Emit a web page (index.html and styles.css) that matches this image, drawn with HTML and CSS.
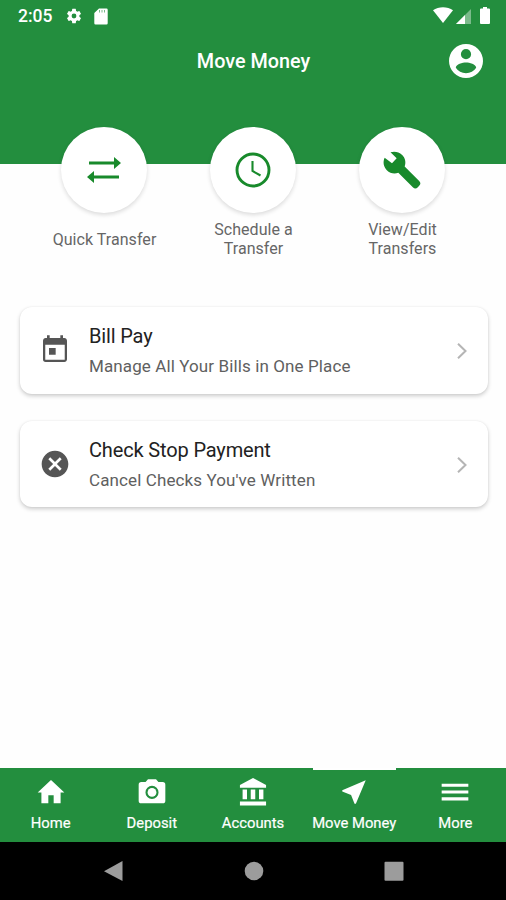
FILE: index.html
```html
<!DOCTYPE html>
<html lang="en">
<head>
<meta charset="utf-8">
<title>Move Money</title>
<link rel="stylesheet" href="styles.css">
</head>
<body>
<div class="screen">
  <header class="header">
    <div class="status">
      <span class="time">2:05</span>
      <svg class="gear" viewBox="0 0 24 24"><path d="M19.14 12.94c.04-.3.06-.61.06-.94s-.02-.64-.07-.94l2.03-1.58a.49.49 0 0 0 .12-.61l-1.92-3.32a.49.49 0 0 0-.59-.22l-2.39.96a7 7 0 0 0-1.62-.94l-.36-2.54a.48.48 0 0 0-.48-.41h-3.84a.48.48 0 0 0-.47.41l-.36 2.54c-.59.24-1.13.57-1.62.94l-2.39-.96a.48.48 0 0 0-.59.22L2.74 8.87a.48.48 0 0 0 .12.61l2.03 1.58c-.05.3-.09.63-.09.94s.02.64.07.94l-2.03 1.58a.49.49 0 0 0-.12.61l1.92 3.32c.12.22.37.29.59.22l2.39-.96c.5.38 1.03.7 1.62.94l.36 2.54c.05.24.24.41.48.41h3.84c.24 0 .44-.17.47-.41l.36-2.54a7 7 0 0 0 1.62-.94l2.39.96c.22.08.47 0 .59-.22l1.92-3.32a.48.48 0 0 0-.12-.61zM12 15.2a3.200 3.200 0 1 1 0-6.400 3.200 3.200 0 0 1 0 6.400z"/></svg>
      <svg class="sd" viewBox="0 0 14 17"><path d="M5 .5h7.500a1.200 1.200 0 0 1 1.200 1.200v13.600a1.200 1.200 0 0 1-1.200 1.200h-11a1.200 1.200 0 0 1-1.200-1.200V5z"/><path class="slots" d="M5.500 2v2.500M8 2v2.500M10.500 2v2.500"/></svg>
      <span class="spacer"></span>
      <svg class="wifi" viewBox="0 0 20 16"><path d="M0 3.200C5.500-.9 14.500-.9 20 3.200L10 16z"/></svg>
      <svg class="signal" viewBox="0 0 15 15"><path d="M15 0v15H0z" opacity=".4"/><path d="M9 6v9H0z"/></svg>
      <svg class="battery" viewBox="0 0 10 17"><path d="M3 0h4v1.500h2a1 1 0 0 1 1 1V16a1 1 0 0 1-1 1H1a1 1 0 0 1-1-1V2.500a1 1 0 0 1 1-1h2z"/></svg>
    </div>
    <div class="titlebar">
      <h1>Move Money</h1>
      <svg class="avatar" viewBox="2 2 20 20"><path d="M12 2a10 10 0 1 0 0 20 10 10 0 0 0 0-20zm0 3a3 3 0 1 1 0 6 3 3 0 0 1 0-6zm0 14.200c-2.500 0-4.710-1.280-6-3.220.03-1.990 4-3.080 6-3.080s5.970 1.090 6 3.080c-1.290 1.940-3.500 3.220-6 3.220z"/></svg>
    </div>
  </header>

  <section class="actions">
    <div class="action">
      <div class="circle"><svg class="i-transfer" viewBox="0 0 34 26"><path class="line" d="M2 6h26M7 20h25"/><path d="M27 0l7 6-7 6zM7 14l-7 6 7 6z"/></svg></div>
      <div class="label">Quick Transfer</div>
    </div>
    <div class="action">
      <div class="circle"><svg class="i-clock" viewBox="0 0 36 36"><circle cx="18" cy="18" r="16"/><path class="hands" d="M17.500 9v10l8 4.500"/></svg></div>
      <div class="label">Schedule a<br>Transfer</div>
    </div>
    <div class="action">
      <div class="circle"><svg class="i-wrench" viewBox="0 0 24 24"><path d="M22.300 18.600l-8.700-8.700c.9-2.300.4-5-1.500-6.900-2-2-4.600-2.400-7-1.700L8.800 4.900 6 8 1.600 4.700C.4 7.100.9 10.100 2.900 12.100c1.900 1.900 4.600 2.400 6.900 1.500l8.700 8.700a2.100 2.100 0 0 0 3 0l.8-.8a2.050 2.050 0 0 0 0-2.900z"/></svg></div>
      <div class="label">View/Edit<br>Transfers</div>
    </div>
  </section>

  <main class="cards">
    <article class="card">
      <svg class="i-card" viewBox="0 0 24 24"><path d="M19 3h-1V1h-2v2H8V1H6v2H5c-1.110 0-1.990.9-1.990 2L3 19a2 2 0 0 0 2 2h14c1.100 0 2-.9 2-2V5c0-1.100-.9-2-2-2zm.300 16.300H4.700V8h14.600v11.300zM7.500 10.500h5v5h-5z"/></svg>
      <div class="text"><h2>Bill Pay</h2><p>Manage All Your Bills in One Place</p></div>
      <svg class="chevron" viewBox="0 0 10 16"><path d="M1 .8L8.500 8 1 15.200"/></svg>
    </article>
    <article class="card">
      <svg class="i-card" viewBox="0 0 24 24"><path d="M12 2C6.470 2 2 6.470 2 12s4.470 10 10 10 10-4.470 10-10S17.530 2 12 2zm5 13.590L15.590 17 12 13.410 8.410 17 7 15.590 10.590 12 7 8.410 8.410 7 12 10.590 15.590 7 17 8.410 13.410 12 17 15.590z"/></svg>
      <div class="text"><h2>Check Stop Payment</h2><p>Cancel Checks You've Written</p></div>
      <svg class="chevron" viewBox="0 0 10 16"><path d="M1 .8L8.500 8 1 15.200"/></svg>
    </article>
  </main>

  <nav class="tabs">
    <div class="tab"><svg viewBox="0 0 24 24"><path d="M10 20.500v-6h4v6h5.200v-8.200H22L12 3 2 12.300h2.800v8.200z"/></svg><span>Home</span></div>
    <div class="tab"><svg viewBox="0 0 24 24"><path fill-rule="evenodd" d="M9 2.500L7.170 4.500H4a2 2 0 0 0-2 2v12a2 2 0 0 0 2 2h16a2 2 0 0 0 2-2v-12a2 2 0 0 0-2-2h-3.170L15 2.500zM12 17.200a4.900 4.900 0 1 1 0-9.800 4.900 4.900 0 0 1 0 9.800z"/><circle cx="12" cy="12.300" r="3.300"/></svg><span>Deposit</span></div>
    <div class="tab"><svg viewBox="0 0 24 24"><path d="M4.200 10.200v7.300h3.300v-7.300zM10.300 10.200v7.300h3.400v-7.300zM2.200 22.200h19.600v-3H2.200zM16.500 10.200v7.300h3.300v-7.300zM12 1.500L2.200 6.800v2h19.600v-2z"/></svg><span>Accounts</span></div>
    <div class="tab active"><svg viewBox="0 0 24 24"><path d="M20.800 3.200L3.200 10.700v1l6.600 2.600 2.600 6.600h1z"/></svg><span>Move Money</span></div>
    <div class="tab"><svg viewBox="0 0 24 24"><path d="M2 18.300h20V16H2zM2 13.200h20v-2.300H2zM2 5.800v2.300h20V5.800z"/></svg><span>More</span></div>
  </nav>

  <footer class="system">
    <svg viewBox="0 0 20 20"><path d="M18.500 0v20L0 10.300z"/></svg>
    <svg viewBox="0 0 20 20"><circle cx="10" cy="10" r="9.300"/></svg>
    <svg viewBox="0 0 20 20"><rect x=".5" y=".7" width="19" height="19" rx="1"/></svg>
  </footer>
</div>
</body>
</html>
```
FILE: styles.css
```css
* { box-sizing: border-box; margin: 0; }
body { background: #fefefe; font-family: Roboto, sans-serif; }
svg { display: block; flex: none; fill: currentColor; }

.screen { width: 506px; height: 900px; display: flex; flex-direction: column; overflow: hidden; }

.header { height: 164px; background: #238e3e; color: #fff; flex: none; }
.status { height: 32px; display: flex; align-items: center; padding: 0 16px 0 18px; }
.time { font-size: 17.500px; font-weight: 500; width: 47px; }
.gear { width: 18px; height: 18px; margin-right: 11px; }
.sd { width: 14px; height: 17px; }
.slots { stroke: #238e3e; stroke-width: 1; opacity: .6; }
.spacer { flex: 1; }
.wifi { width: 20px; height: 16px; margin: 0 3px 2px 0; }
.signal { width: 15px; height: 15px; margin: 0 9px 0 0; }
.battery { width: 10px; height: 17px; margin-bottom: 1px; }
.titlebar { height: 58px; display: grid; grid-template-columns: 1fr auto 1fr; align-items: center; padding-right: 23px; padding-left: 24px; }
.titlebar h1 { grid-column: 2; font-size: 19.800px; font-weight: 500; padding-top: 1px; }
.avatar { width: 34px; height: 34px; justify-self: end; }

.actions { display: flex; justify-content: center; margin-top: -37px; height: 180px; flex: none; }
.action { width: 149px; display: flex; flex-direction: column; align-items: center; }
.circle { width: 86px; height: 86px; border-radius: 50%; background: #fff; color: #188a2b; display: flex; align-items: center; justify-content: center; box-shadow: 0 2px 4px rgba(0,0,0,.14); flex: none; }
.i-transfer { width: 34px; height: 26px; }
.line { stroke: currentColor; stroke-width: 2.800; }
.i-clock { width: 36px; height: 36px; fill: none; stroke: currentColor; stroke-width: 2.900; }
.hands { stroke-width: 2.100; }
.i-wrench { width: 40px; height: 40px; }
.label { height: 52px; display: flex; align-items: center; text-align: center; font-size: 16px; line-height: 19px; color: #666; letter-spacing: .05px; padding-left: 1px; }

.cards { flex: 1; padding: 0 18px 0 20px; display: flex; flex-direction: column; gap: 27px; }
.card { height: 86.500px; border-radius: 12px; background: #fff; box-shadow: 0 2px 4px rgba(0,0,0,.2), 0 0 2px rgba(0,0,0,.06); display: flex; align-items: center; padding: 0 21px 0 19px; }
.i-card { width: 32px; height: 32px; color: #555; margin-right: 18px; }
.text { flex: 1; padding-top: 1px; }
.text h2 { font-size: 20px; font-weight: 400; line-height: 26px; color: #222; letter-spacing: -.15px; }
.text p { font-size: 17px; line-height: 24px; margin-top: 5px; color: #606060; letter-spacing: .11px; }
.chevron { width: 10px; height: 16px; margin-top: 2px; fill: none; stroke: #b5b5b5; stroke-width: 2; }

.tabs { height: 74px; background: #238e3e; color: #fff; display: flex; flex: none; }
.tab { flex: 1; display: flex; flex-direction: column; align-items: center; padding-top: 8px; position: relative; }
.tab svg { width: 32px; height: 32px; }
.tab span { font-size: 14.800px; line-height: 18px; margin-top: 6px; white-space: nowrap; -webkit-text-stroke: .2px currentColor; }
.active::before { content: ""; position: absolute; top: 0; width: 83px; height: 2px; background: #fff; }

.system { height: 58px; background: #000; color: #9c9c9c; display: flex; justify-content: center; align-items: center; gap: 120px; flex: none; padding-left: 1px; }
.system svg { width: 20px; height: 20px; }
```
